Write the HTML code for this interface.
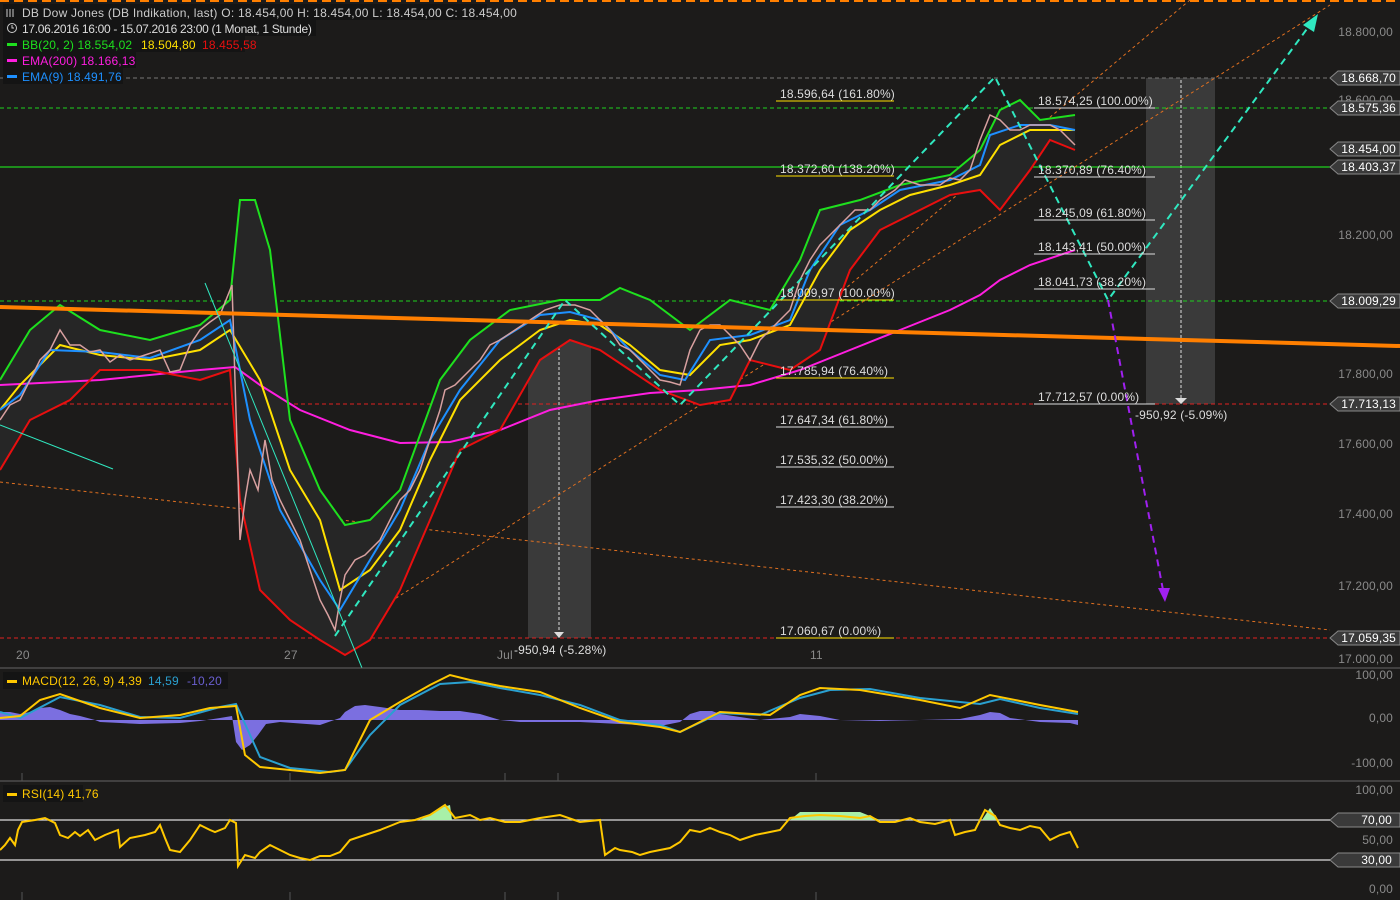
<!DOCTYPE html>
<html><head><meta charset="utf-8"><style>
html,body{margin:0;padding:0;background:#1c1b1a;width:1400px;height:900px;overflow:hidden;font-family:"Liberation Sans",sans-serif}
svg{position:absolute;left:0;top:0}
text{font-family:"Liberation Sans",sans-serif;font-size:12px;letter-spacing:0.15px}
</style></head><body>
<svg width="1400" height="900" viewBox="0 0 1400 900">
<rect width="1400" height="900" fill="#1c1b1a"/>
<line x1="0" y1="1" x2="1400" y2="1" stroke="#ff7f00" stroke-width="2" stroke-dasharray="9,5"/>
<rect x="528" y="300" width="63" height="338" fill="#3a3a3a"/>
<rect x="1146" y="78" width="69" height="326" fill="#3a3a3a"/>
<line x1="559" y1="302" x2="559" y2="634" stroke="#ddd" stroke-dasharray="3,2"/>
<polygon points="554,632 564,632 559,638" fill="#ddd"/>
<line x1="1181" y1="80" x2="1181" y2="398" stroke="#ddd" stroke-dasharray="3,2"/>
<polygon points="1175,398 1187,398 1181,404" fill="#ddd"/>
<line x1="0" y1="78" x2="1330" y2="78" stroke="#777" stroke-dasharray="4,3"/>
<line x1="0" y1="108" x2="1330" y2="108" stroke="#1ed01e" stroke-dasharray="4,3"/>
<line x1="0" y1="167" x2="1330" y2="167" stroke="#1eff1e"/>
<line x1="0" y1="301" x2="1330" y2="301" stroke="#1ed01e" stroke-dasharray="4,3"/>
<line x1="0" y1="404" x2="1330" y2="404" stroke="#e02020" stroke-dasharray="4,3"/>
<line x1="0" y1="638" x2="1330" y2="638" stroke="#e02020" stroke-dasharray="4,3"/>
<g stroke="#e07020" stroke-width="1" stroke-dasharray="3,3" fill="none">
<line x1="0" y1="482" x2="1330" y2="630"/>
<line x1="330" y1="640" x2="1330" y2="5"/>
<line x1="760" y1="360" x2="1190" y2="0"/>
</g>
<path d="M0,380 L30,330 L60,305 L100,330 L150,340 L200,325 L230,300 L240,200 L255,200 L270,250 L290,420 L320,490 L345,525 L370,520 L400,490 L440,380 L470,340 L510,310 L560,300 L600,300 L620,288 L650,300 L690,330 L730,300 L770,310 L800,260 L820,210 L860,200 L900,185 L950,175 L980,150 L1000,110 L1020,100 L1040,120 L1075,115 L1075,150 L1050,140 L1030,170 L1000,210 L980,190 L950,195 L910,215 L880,230 L850,270 L820,350 L790,370 L750,360 L730,400 L700,405 L660,390 L630,370 L600,350 L570,340 L540,360 L500,430 L460,450 L430,520 L400,590 L370,640 L345,655 L320,640 L290,620 L260,590 L240,500 L230,370 L200,380 L150,370 L100,370 L70,400 L30,420 L0,470Z" fill="#262626"/>
<polyline fill="none" stroke="#ff1ee0" stroke-width="2" points="0,385 100,380 200,370 235,367 260,385 300,410 350,430 400,443 450,442 500,430 550,410 600,400 650,393 700,390 750,385 800,370 850,350 900,330 950,310 980,295 1000,280 1030,265 1075,250"/>
<polyline fill="none" stroke="#1ee01e" stroke-width="2" points="0,380 30,330 60,305 100,330 150,340 200,325 230,300 240,200 255,200 270,250 290,420 320,490 345,525 370,520 400,490 440,380 470,340 510,310 560,300 600,300 620,288 650,300 690,330 730,300 770,310 800,260 820,210 860,200 900,185 950,175 980,150 1000,110 1020,100 1040,120 1075,115"/>
<polyline fill="none" stroke="#e80f0f" stroke-width="2" points="0,470 30,420 70,400 100,370 150,370 200,380 230,370 240,500 260,590 290,620 320,640 345,655 370,640 400,590 430,520 460,450 500,430 540,360 570,340 600,350 630,370 660,390 700,405 730,400 750,360 790,370 820,350 850,270 880,230 910,215 950,195 980,190 1000,210 1030,170 1050,140 1075,150"/>
<polyline fill="none" stroke="#ffe000" stroke-width="2" points="0,410 20,385 60,345 100,355 150,360 200,350 230,330 260,380 290,470 320,520 340,590 370,570 400,530 430,460 460,400 500,360 540,330 570,320 600,325 630,345 660,370 690,375 720,345 750,340 790,325 820,270 850,230 880,210 910,195 950,185 980,175 1000,145 1030,130 1075,130"/>
<polyline fill="none" stroke="#1e90ff" stroke-width="2" points="0,410 20,395 50,350 100,352 150,358 200,340 230,320 250,420 280,510 320,580 340,610 370,560 400,510 430,440 460,390 500,340 540,315 570,312 600,320 630,350 660,375 685,380 710,340 750,335 790,320 810,270 840,225 870,210 900,190 950,180 980,165 990,135 1020,125 1050,125 1075,130"/>
<polyline fill="none" stroke="#d8a0a0" stroke-width="1.5" points="0,420 10,405 20,400 30,380 40,360 50,350 60,330 70,345 80,345 90,352 100,350 110,362 120,355 130,360 145,355 160,350 170,372 180,370 190,345 200,330 210,322 220,315 232,285 240,540 245,500 250,470 258,490 265,440 272,480 280,500 290,520 300,540 310,570 320,600 328,615 335,630 340,600 345,575 355,560 365,555 372,548 380,540 390,520 400,500 410,490 420,470 430,440 440,410 445,390 455,385 470,370 480,360 490,345 500,340 515,330 530,320 545,310 560,305 575,305 590,310 600,320 610,330 620,345 630,350 640,360 650,370 660,380 670,382 680,385 690,350 700,330 710,325 720,325 730,335 740,345 750,360 760,340 775,325 790,310 800,280 810,260 820,245 830,235 840,225 855,210 870,210 880,200 895,190 905,180 920,185 940,185 950,178 960,180 970,170 980,140 990,115 1000,120 1010,130 1020,130 1030,125 1040,125 1050,125 1060,130 1075,145"/>
<line x1="0" y1="307" x2="1400" y2="346" stroke="#ff7f00" stroke-width="4"/>
<polyline fill="none" stroke="#30e8c0" stroke-width="2" stroke-dasharray="7,5" points="335,636 565,300 680,405 995,77 1108,300 1312,22"/>
<polygon points="1318,14 1303,25 1314,32" fill="#30e8c0"/>
<line x1="205" y1="283" x2="362" y2="668" stroke="#30e8c0" stroke-width="1"/>
<line x1="0" y1="425" x2="113" y2="469" stroke="#30e8c0" stroke-width="1"/>
<line x1="1108" y1="300" x2="1163" y2="590" stroke="#a020f0" stroke-width="2" stroke-dasharray="7,5"/>
<polygon points="1158,588 1170,588 1165,602" fill="#a020f0"/>
<g fill="#ddd">
<text x="780" y="98">18.596,64 (161.80%)</text>
<text x="780" y="173">18.372,60 (138.20%)</text>
<text x="780" y="297">18.009,97 (100.00%)</text>
<text x="780" y="375">17.785,94 (76.40%)</text>
<text x="780" y="424">17.647,34 (61.80%)</text>
<text x="780" y="464">17.535,32 (50.00%)</text>
<text x="780" y="504">17.423,30 (38.20%)</text>
<text x="780" y="635">17.060,67 (0.00%)</text>
<text x="1038" y="105">18.574,25 (100.00%)</text>
<text x="1038" y="174">18.370,89 (76.40%)</text>
<text x="1038" y="217">18.245,09 (61.80%)</text>
<text x="1038" y="251">18.143,41 (50.00%)</text>
<text x="1038" y="286">18.041,73 (38.20%)</text>
<text x="1038" y="401">17.712,57 (0.00%)</text>
<text x="1135" y="419">-950,92 (-5.09%)</text>
<text x="514" y="654">-950,94 (-5.28%)</text>
</g>
<g stroke="#ffe000"><line x1="776" y1="101" x2="894" y2="101"/><line x1="776" y1="176" x2="894" y2="176"/><line x1="776" y1="300" x2="894" y2="300"/><line x1="776" y1="378" x2="894" y2="378"/><line x1="776" y1="638" x2="894" y2="638"/></g>
<g stroke="#ddd"><line x1="776" y1="427" x2="894" y2="427"/><line x1="776" y1="467" x2="894" y2="467"/><line x1="776" y1="507" x2="894" y2="507"/><line x1="1034" y1="108" x2="1155" y2="108"/><line x1="1034" y1="177" x2="1155" y2="177"/><line x1="1034" y1="220" x2="1155" y2="220"/><line x1="1034" y1="254" x2="1155" y2="254"/><line x1="1034" y1="289" x2="1155" y2="289"/><line x1="1034" y1="404" x2="1155" y2="404"/></g>
<g fill="#8a8a8a" text-anchor="end">
<text x="1393" y="36">18.800,00</text><text x="1393" y="104">18.600,00</text>
<text x="1393" y="239">18.200,00</text><text x="1393" y="378">17.800,00</text>
<text x="1393" y="448">17.600,00</text><text x="1393" y="518">17.400,00</text>
<text x="1393" y="590">17.200,00</text><text x="1393" y="663">17.000,00</text>
<text x="1393" y="679">100,00</text><text x="1393" y="722">0,00</text><text x="1393" y="767">-100,00</text>
<text x="1393" y="794">100,00</text><text x="1393" y="844">50,00</text><text x="1393" y="893">0,00</text>
</g>
<g>
<path d="M1338,71 H1400 V85 H1338 L1330,78Z" fill="#3a3a3a" stroke="#888"/>
<path d="M1338,101 H1400 V115 H1338 L1330,108Z" fill="#3a3a3a" stroke="#888"/>
<path d="M1338,142 H1400 V156 H1338 L1330,149Z" fill="#3a3a3a" stroke="#888"/>
<path d="M1338,160 H1400 V174 H1338 L1330,167Z" fill="#3a3a3a" stroke="#888"/>
<path d="M1338,294 H1400 V308 H1338 L1330,301Z" fill="#3a3a3a" stroke="#888"/>
<path d="M1338,397 H1400 V411 H1338 L1330,404Z" fill="#3a3a3a" stroke="#888"/>
<path d="M1338,631 H1400 V645 H1338 L1330,638Z" fill="#3a3a3a" stroke="#888"/>
<path d="M1338,813 H1400 V827 H1338 L1330,820Z" fill="#3a3a3a" stroke="#888"/>
<path d="M1338,853 H1400 V867 H1338 L1330,860Z" fill="#3a3a3a" stroke="#888"/>
<g fill="#fff" text-anchor="end"><text x="1396" y="82">18.668,70</text><text x="1396" y="112">18.575,36</text><text x="1396" y="153">18.454,00</text><text x="1396" y="171">18.403,37</text><text x="1396" y="305">18.009,29</text><text x="1396" y="408">17.713,13</text><text x="1396" y="642">17.059,35</text><text x="1392" y="824">70,00</text><text x="1392" y="864">30,00</text></g>
</g>
<g fill="#8a8a8a"><text x="16" y="659">20</text><text x="284" y="659">27</text><text x="497" y="659">Jul</text><text x="810" y="659">11</text></g>
<line x1="0" y1="668" x2="1400" y2="668" stroke="#666"/>
<line x1="0" y1="781" x2="1400" y2="781" stroke="#666"/>
<!-- MACD histogram as dense area -->
<polygon fill="#7b6fe0" points="0,720 0,712 10,712 20,714 30,712 40,708 50,707 60,710 70,714 80,716 95,720 100,722 140,724 180,723 200,721 220,718 232,716 236,742 242,750 250,745 258,735 266,724 280,722 320,725 340,718 345,712 355,706 365,705 380,707 400,710 420,710 440,711 460,711 480,714 500,720 520,722 560,722 580,722 600,723 620,724 660,726 680,722 690,714 700,711 712,711 720,714 740,717 760,720 790,717 800,714 820,716 840,720 880,721 920,720 960,719 980,715 990,712 1000,713 1010,718 1040,722 1070,723 1078,725 1078,720"/>
<polyline fill="none" stroke="#2aa0d0" stroke-width="2" points="0,712 20,718 60,697 100,705 140,717 180,718 220,707 236,704 260,757 290,768 330,772 345,770 370,735 400,705 440,684 470,682 500,688 540,695 580,705 620,720 660,725 680,732 720,713 760,715 800,698 830,690 870,689 920,698 980,704 1000,699 1040,708 1078,714"/>
<polyline fill="none" stroke="#ffc800" stroke-width="2" points="0,718 20,716 40,700 60,694 100,708 140,718 180,715 210,708 236,706 245,755 260,767 290,770 320,773 345,770 370,720 400,702 430,685 450,675 470,680 500,686 540,692 580,708 620,722 660,727 680,732 720,712 770,715 800,695 820,688 860,690 920,700 960,708 990,695 1040,705 1078,712"/>
<line x1="0" y1="820" x2="1330" y2="820" stroke="#ddd" stroke-width="1.2"/>
<line x1="0" y1="860" x2="1330" y2="860" stroke="#ddd" stroke-width="1.2"/>
<polygon points="420,820 440,808 450,805 452,820" fill="#a8f0a8"/>
<polygon points="790,820 800,812 820,812 860,812 880,820" fill="#a8f0a8"/>
<polygon points="982,820 990,808 998,820" fill="#a8f0a8"/>
<polyline fill="none" stroke="#ffc800" stroke-width="2" points="0,850 5,845 10,838 15,845 18,830 22,822 35,820 45,818 55,823 60,835 68,838 75,832 80,836 88,830 95,840 105,835 110,833 118,830 120,847 130,838 145,835 155,832 160,825 165,838 170,850 180,852 190,840 200,825 210,830 215,832 225,828 230,820 236,823 238,866 245,855 255,858 260,852 270,845 280,850 290,855 300,858 310,860 320,856 330,856 340,852 350,840 365,835 380,830 390,826 400,822 415,820 430,815 445,805 455,818 470,815 480,820 490,818 505,822 520,822 540,818 560,815 580,822 600,820 605,855 615,848 620,850 632,852 640,855 650,852 660,850 670,848 680,842 690,830 700,832 710,828 720,832 730,835 740,840 755,835 770,832 780,830 790,818 805,816 820,815 840,816 860,818 870,816 880,822 895,822 910,818 920,822 935,824 950,820 955,835 965,832 975,830 985,810 995,816 1000,825 1010,828 1020,830 1030,826 1040,828 1050,840 1060,835 1070,832 1078,848"/>
<g stroke="#555"><line x1="22" y1="773" x2="22" y2="781"/><line x1="290" y1="773" x2="290" y2="781"/><line x1="505" y1="773" x2="505" y2="781"/><line x1="558" y1="773" x2="558" y2="781"/><line x1="816" y1="773" x2="816" y2="781"/>
<line x1="22" y1="892" x2="22" y2="900"/><line x1="290" y1="892" x2="290" y2="900"/><line x1="505" y1="892" x2="505" y2="900"/><line x1="558" y1="892" x2="558" y2="900"/><line x1="816" y1="892" x2="816" y2="900"/></g>
<rect x="3" y="672" width="225" height="17" fill="#141414"/>
<rect x="7" y="680" width="10" height="3" fill="#ffc800"/>
<text x="22" y="685" fill="#ffc800">MACD(12, 26, 9)</text><text x="118" y="685" fill="#ffc800">4,39</text><text x="148" y="685" fill="#2aa0d0">14,59</text><text x="187" y="685" fill="#6a5fd0">-10,20</text>
<rect x="3" y="785" width="80" height="17" fill="#141414"/>
<rect x="7" y="793" width="10" height="3" fill="#ffc800"/>
<text x="22" y="798" fill="#ffc800">RSI(14)  41,76</text>
<rect x="3" y="4" width="484" height="16" fill="#141414"/>
<g stroke="#ccc" stroke-width="1"><path d="M7,9V17M10,9V17M13,9V17"/></g>
<text x="22" y="17" fill="#ccc" textLength="495">DB Dow Jones (DB Indikation, last)  O: 18.454,00  H: 18.454,00  L: 18.454,00  C: 18.454,00</text>
<rect x="3" y="20" width="313" height="16" fill="#141414"/>
<circle cx="12" cy="28" r="4.5" fill="none" stroke="#ccc"/><path d="M12,25V28H14" stroke="#ccc" fill="none"/>
<text x="22" y="33" fill="#ddd" textLength="290">17.06.2016 16:00 - 15.07.2016 23:00 (1 Monat, 1 Stunde)</text>
<rect x="3" y="36" width="242" height="16" fill="#141414"/>
<rect x="7" y="43" width="10" height="3" fill="#1ee01e"/>
<text x="22" y="49" fill="#1ee01e">BB(20, 2)  18.554,02</text><text x="141" y="49" fill="#ffe000">18.504,80</text><text x="202" y="49" fill="#e80f0f">18.455,58</text>
<rect x="3" y="52" width="133" height="16" fill="#141414"/>
<rect x="7" y="59" width="10" height="3" fill="#ff1ee0"/>
<text x="22" y="65" fill="#ff1ee0">EMA(200)  18.166,13</text>
<rect x="3" y="68" width="120" height="16" fill="#141414"/>
<rect x="7" y="75" width="10" height="3" fill="#1e90ff"/>
<text x="22" y="81" fill="#1e90ff">EMA(9)  18.491,76</text>
</svg>
</body></html>
